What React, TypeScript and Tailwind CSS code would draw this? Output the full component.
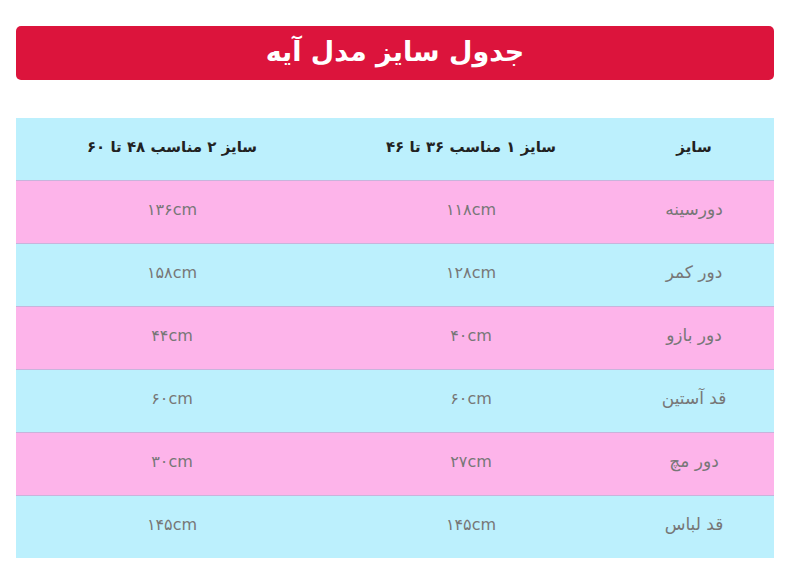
const rows: [string, string, string][] = [
  ['دورسینه', '۱۱۸cm', '۱۳۶cm'],
  ['دور کمر', '۱۲۸cm', '۱۵۸cm'],
  ['دور بازو', '۴۰cm', '۴۴cm'],
  ['قد آستین', '۶۰cm', '۶۰cm'],
  ['دور مچ', '۲۷cm', '۳۰cm'],
  ['قد لباس', '۱۴۵cm', '۱۴۵cm'],
]

export default function App() {
  return (
    <div
      dir="rtl"
      className="w-[794px] h-[574px] bg-white pl-4 pr-5 pt-[26px]"
      style={{ fontFamily: '"DejaVu Sans", "Noto Sans", sans-serif' }}
    >
      <div className="h-[54px] rounded-[5px] bg-[#dc143c] flex items-center justify-center">
        <h1 className="text-[27px] font-bold text-white leading-none pb-1">جدول سایز مدل آیه</h1>
      </div>

      <table className="mt-[38px] w-full border-collapse table-fixed">
        <colgroup>
          <col className="w-[160px]" />
          <col className="w-[286px]" />
          <col />
        </colgroup>
        <thead>
          <tr className="bg-[#bcf0fd] h-[62px]">
            <th className="text-[15px] font-bold text-[#222] text-center pb-1">سایز</th>
            <th className="text-[15px] font-bold text-[#222] text-center pb-1">سایز ۱ مناسب ۳۶ تا ۴۶</th>
            <th className="text-[15px] font-bold text-[#222] text-center pb-1">سایز ۲ مناسب ۴۸ تا ۶۰</th>
          </tr>
        </thead>
        <tbody>
          {rows.map((r, i) => (
            <tr
              key={r[0]}
              className={`h-[63px] border-t border-[#c8b4dc] ${i % 2 === 0 ? 'bg-[#fdb4ea]' : 'bg-[#bcf0fd]'}`}
            >
              <td className="text-[17px] text-[#777] text-center pb-1">{r[0]}</td>
              <td className="text-[16px] text-[#777] text-center pb-1">{r[1]}</td>
              <td className="text-[16px] text-[#777] text-center pb-1">{r[2]}</td>
            </tr>
          ))}
        </tbody>
      </table>
    </div>
  )
}
